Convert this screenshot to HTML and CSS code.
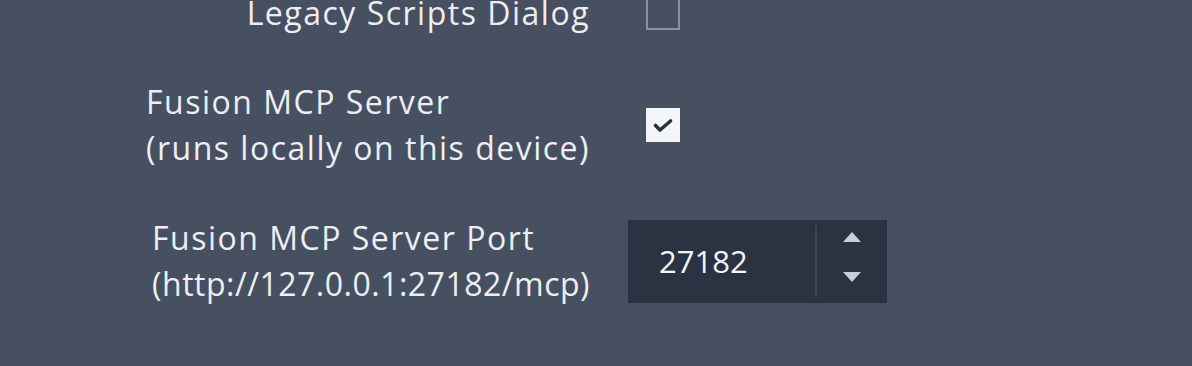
FILE: index.html
```html
<!DOCTYPE html>
<html>
<head>
<meta charset="utf-8">
<link rel="stylesheet" href="styles.css">
</head>
<body>
<div class="form">
  <div class="row row-first">
    <div class="label">Legacy Scripts Dialog</div>
    <div class="control"><span class="checkbox"></span></div>
  </div>

  <div class="row row-mcp">
    <div class="label">Fusion MCP Server<br>(runs locally on this device)</div>
    <div class="control"><span class="checkbox checked">
      <svg viewBox="0 0 34 34" width="34" height="34"><path d="M9.5 17.5 L14 22 L24.5 13" fill="none" stroke="#2c3340" stroke-width="3.6" stroke-linecap="round" stroke-linejoin="round"/></svg>
    </span></div>
  </div>

  <div class="row row-port">
    <div class="label">Fusion MCP Server Port<br><span class="url">(http://127.0.0.1:27182/mcp)</span></div>
    <div class="control">
      <div class="spin">
        <span class="spin-value">27182</span>
        <span class="spin-arrows">
          <svg viewBox="0 0 20 12" width="20" height="12"><path d="M1 11 L10 1 L19 11 Z" fill="#c9ced6"/></svg>
          <svg viewBox="0 0 20 12" width="20" height="12"><path d="M1 1 L19 1 L10 11 Z" fill="#c9ced6"/></svg>
        </span>
      </div>
    </div>
  </div>
</div>
</body>
</html>
```
FILE: styles.css
```css
html, body {
  margin: 0;
  padding: 0;
  background: #465061;
  height: 100%;
  overflow: hidden;
}
body {
  font-family: "Open Sans", "Noto Sans", sans-serif;
  color: #eceef2;
}
.form {
  display: flex;
  flex-direction: column;
}
.row {
  display: grid;
  grid-template-columns: 590px auto;
  column-gap: 38px;
  align-items: center;
}
.row-first {
  margin-top: -4px;
}
.row-first .label {
  line-height: 30px;
}
.row-mcp {
  margin-top: 49px;
}
.row-port {
  margin-top: 44px;
}
.label {
  justify-self: end;
  text-align: left;
  font-size: 32px;
  line-height: 46px;
  letter-spacing: 1.5px;
  white-space: nowrap;
}
.url {
  letter-spacing: 0.5px;
}
.control {
  display: flex;
  align-items: center;
}
.checkbox {
  box-sizing: border-box;
  width: 34px;
  height: 34px;
  margin-left: 18px;
  border: 2px solid #8b919b;
  display: flex;
}
.checkbox.checked {
  background: #f3f5f8;
  border-color: #f3f5f8;
}
.checkbox.checked svg {
  margin: -2px;
}
.spin {
  width: 259px;
  height: 83px;
  background: #2b3241;
  display: flex;
  align-items: center;
}
.spin-value {
  flex: 1;
  padding-left: 31px;
  font-size: 31px;
  color: #f2f4f7;
}
.spin-arrows {
  width: 72px;
  height: 73px;
  border-left: 2px solid #3b4352;
  display: flex;
  flex-direction: column;
  align-items: center;
  justify-content: space-between;
  padding: 6px 0 15px;
  box-sizing: border-box;
}
```
